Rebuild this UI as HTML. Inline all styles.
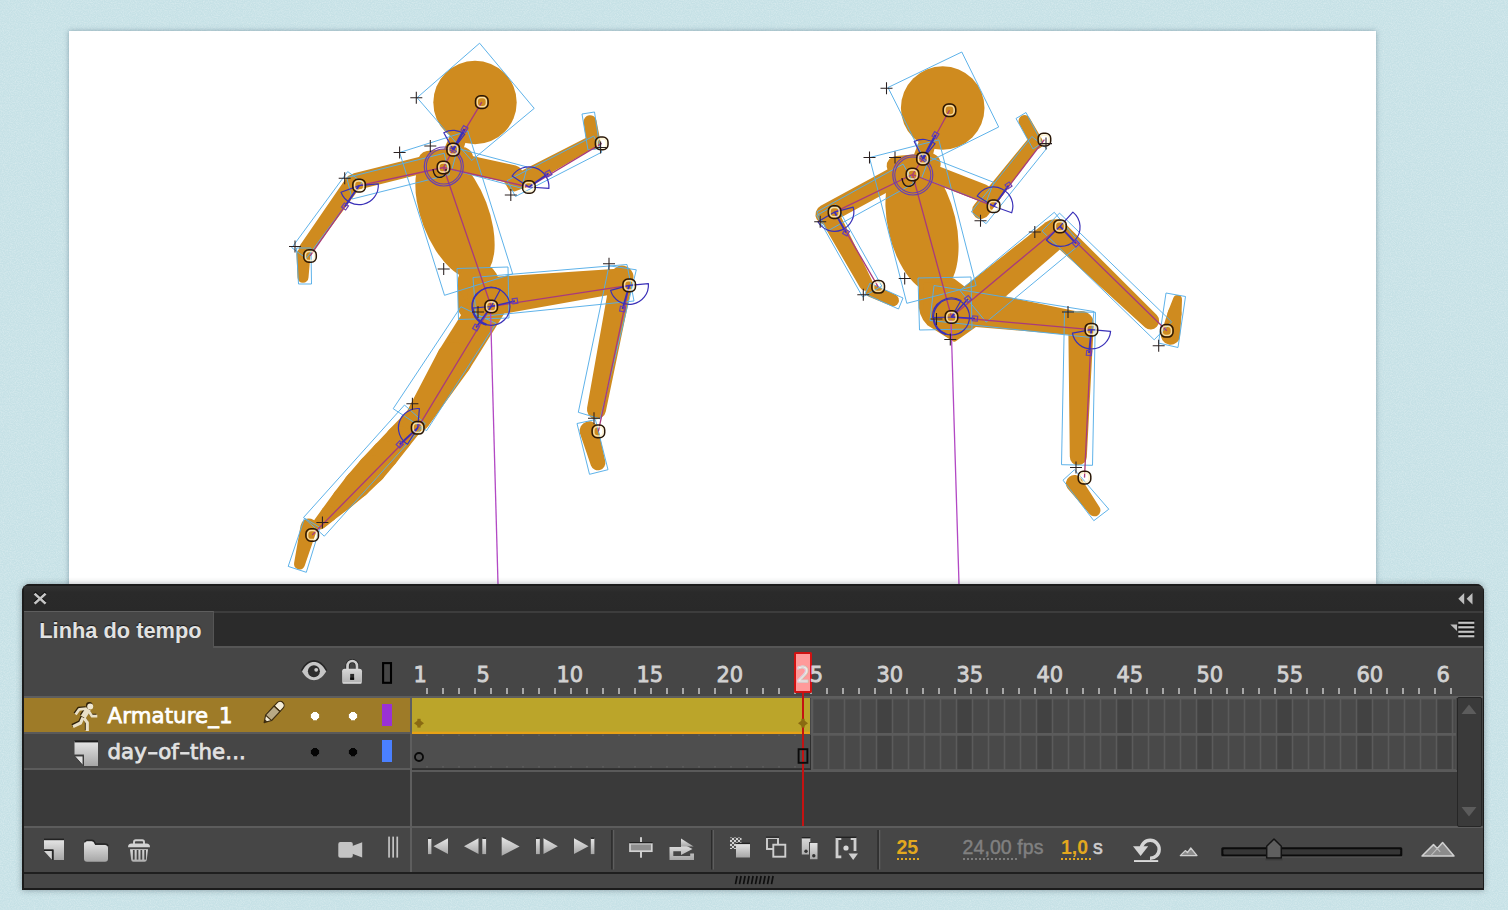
<!DOCTYPE html>
<html lang="pt"><head><meta charset="utf-8"><title>Linha do tempo</title>
<style>
html,body{margin:0;padding:0}
body{width:1508px;height:910px;position:relative;overflow:hidden;background:#c6e1e6;
 font-family:"DejaVu Sans","Liberation Sans",sans-serif;}
.abs{position:absolute}
#stage{left:69px;top:31px;width:1307px;height:560px;background:#fff;
 box-shadow:0 0 5px rgba(70,100,120,.5)}
#figs{left:0;top:0}
#panel{left:22px;top:584px;width:1462px;height:305.5px;background:#464646;
 border-radius:8px 8px 0 0;box-shadow:0 0 6px rgba(30,40,50,.38);overflow:hidden}
#panel .in{position:absolute;left:-22px;top:-584px;width:1508px;height:910px}
.t{position:absolute;white-space:nowrap;line-height:1}
.num{font-size:21px;color:#d2d2d2;top:664.6px;-webkit-text-stroke:.8px #d2d2d2}
.lname{font-size:21.3px;color:#fff;left:107.5px;-webkit-text-stroke:.75px currentColor;letter-spacing:.1px}
.hy{display:inline-block;transform:scaleX(1.45);margin:0 1.7px}
.bt{font-family:"Liberation Sans","DejaVu Sans",sans-serif;font-size:19.5px;top:838px}
</style></head>
<body>
<svg class="abs" style="left:0;top:0" width="1508" height="910" viewBox="0 0 1508 910"><defs><filter id="nz" x="0" y="0" width="100%" height="100%"><feTurbulence type="fractalNoise" baseFrequency="0.85" numOctaves="2" seed="7" stitchTiles="stitch"/><feColorMatrix type="matrix" values="0 0 0 0 1  0 0 0 0 1  0 0 0 0 1  0.55 0 0 0 -0.2"/></filter></defs><rect width="1508" height="910" filter="url(#nz)"/></svg>
<div id="stage" class="abs"></div>
<svg id="figs" class="abs" width="1508" height="910" viewBox="0 0 1508 910">
<defs><clipPath id="stclip"><rect x="69" y="31" width="1307" height="553"/></clipPath></defs>
<g clip-path="url(#stclip)">
<g fill="#cf8b1f"><circle cx="475" cy="102.5" r="41.7"/><path d="M450.2,134.7 L442.3,153.3 A9.5,9.5 0 1 0 460.1,159.8 L466.1,140.5 A8.5,8.5 0 0 0 450.2,134.7 Z"/><ellipse cx="455" cy="214.5" rx="33.5" ry="68" transform="rotate(-21 455 214.5)"/><path d="M428.6,171.0 L462.6,169.0 A11.0,11.0 0 1 0 460.7,147.1 L426.8,151.1 A10.0,10.0 0 0 0 428.6,171.0 Z"/><path d="M429.9,154.3 L353.9,173.3 A8.5,8.5 0 0 0 358.1,189.7 L434.1,170.7 A8.5,8.5 0 0 0 429.9,154.3 Z"/><path d="M346.0,178.2 L300.2,245.0 A7.0,7.0 0 0 0 311.6,253.2 L359.8,188.1 A8.5,8.5 0 1 0 346.0,178.2 Z"/><path d="M296.5,254.3 L297.5,277.2 A5.5,5.5 0 0 0 308.5,277.5 L310.5,254.6 A7.0,7.0 0 1 0 296.5,254.3 Z"/><path d="M458.0,171.7 L511.7,183.5 A9.2,9.2 0 0 0 515.7,165.5 L462.0,153.7 A9.2,9.2 0 0 0 458.0,171.7 Z"/><polygon points="503,180 509.3,190.5 514.6,191.6 528,186.5 521,174"/><path d="M526.3,187.3 L593.7,147.9 A6.2,6.2 0 0 0 587.7,136.9 L518.1,172.4 A8.5,8.5 0 1 0 526.3,187.3 Z"/><path d="M583.6,122.4 L586.6,143.5 A7.0,7.0 0 1 0 600.4,141.2 L596.4,120.3 A6.5,6.5 0 0 0 583.6,122.4 Z"/><rect x="458" y="268" width="40" height="51" rx="12"/><path d="M460.5,291.7 L471.4,311.2 A19.0,19.0 0 0 0 505.4,294.3 L496.3,273.9 A20.0,20.0 0 1 0 460.5,291.7 Z"/><path d="M489.4,316.2 L620.1,293.1 A12.2,12.2 0 0 0 617.2,268.8 L484.7,277.5 A19.5,19.5 0 1 0 489.4,316.2 Z"/><path d="M610.7,275.0 L587.1,407.8 A9.5,9.5 0 0 0 605.8,411.4 L633.3,279.3 A11.5,11.5 0 1 0 610.7,275.0 Z"/><path d="M580.0,433.6 L590.9,465.4 A7.5,7.5 0 0 0 605.3,461.4 L598.3,428.5 A9.5,9.5 0 1 0 580.0,433.6 Z"/><path d="M473.3,295.4 L438.8,350.4 A18.0,18.0 0 0 0 469.2,369.6 L503.7,314.6 A18.0,18.0 0 0 0 473.3,295.4 Z"/><path d="M438.0,351.7 L406.0,413.0 A13.0,13.0 0 0 0 428.0,426.6 L468.6,370.5 A18.0,18.0 0 1 0 438.0,351.7 Z"/><path d="M402.9,415.6 L388.8,430.1 A13.0,13.0 0 1 0 408.3,447.3 L420.9,431.5 A12.0,12.0 0 0 0 402.9,415.6 Z"/><path d="M388.7,430.2 L374.8,444.9 A14.0,14.0 0 1 0 396.0,463.1 L408.4,447.2 A13.0,13.0 0 0 0 388.7,430.2 Z"/><path d="M374.7,445.0 L360.9,459.7 A14.5,14.5 0 1 0 382.6,479.0 L395.6,463.6 A14.0,14.0 0 0 0 374.7,445.0 Z"/><path d="M360.5,460.2 L347.3,475.5 A13.5,13.5 0 0 0 366.9,494.1 L381.5,480.1 A14.5,14.5 0 1 0 360.5,460.2 Z"/><path d="M346.9,476.0 L334.6,491.9 A11.2,11.2 0 0 0 350.6,507.5 L366.1,494.7 A13.5,13.5 0 1 0 346.9,476.0 Z"/><path d="M334.4,492.2 L322.6,508.4 A8.2,8.2 0 0 0 334.3,519.8 L350.2,507.8 A11.2,11.2 0 1 0 334.4,492.2 Z"/><path d="M322.6,508.4 L314.8,519.2 A6.5,6.5 0 0 0 324.1,528.1 L334.5,519.7 A8.2,8.2 0 1 0 322.6,508.4 Z"/><path d="M300.6,525.5 L294.1,563.1 A5.5,5.5 0 0 0 304.7,565.8 L317.0,529.8 A8.5,8.5 0 1 0 300.6,525.5 Z"/></g>
<g><polygon points="479.6,43.2 534.2,108.4 471.6,160.5 417.1,97.7" fill="none" stroke="#55aee8" stroke-width="0.95"/><polygon points="444.1,153.3 346.8,177.6 352.1,199.0 449.5,174.6" fill="none" stroke="#55aee8" stroke-width="0.95"/><polygon points="347.7,171.6 291.8,247.7 306.3,258.4 362.2,182.3" fill="none" stroke="#55aee8" stroke-width="0.95"/><polygon points="296.5,248.0 311.0,248.0 311.5,284.0 298.5,284.0" fill="none" stroke="#55aee8" stroke-width="0.95"/><polygon points="451.9,169.6 521.5,188.2 527.2,167.0 457.6,148.4" fill="none" stroke="#55aee8" stroke-width="0.95"/><polygon points="515.4,196.5 601.9,152.1 593.7,136.1 507.2,180.5" fill="none" stroke="#55aee8" stroke-width="0.95"/><polygon points="582.0,114.0 594.5,112.0 600.0,148.5 588.0,150.0" fill="none" stroke="#55aee8" stroke-width="0.95"/><polygon points="399.6,152.5 467.8,131.0 512.7,273.9 444.5,295.3" fill="none" stroke="#55aee8" stroke-width="0.95"/><polygon points="457.0,268.5 508.0,267.0 509.0,318.0 458.5,319.5" fill="none" stroke="#55aee8" stroke-width="0.95"/><polygon points="473.0,277.5 627.0,264.5 634.0,301.0 476.0,317.0" fill="none" stroke="#55aee8" stroke-width="0.95"/><polygon points="609.0,265.8 578.3,412.3 600.2,418.9 636.3,269.8" fill="none" stroke="#55aee8" stroke-width="0.95"/><polygon points="577.0,423.5 595.4,419.6 608.0,469.7 589.5,474.3" fill="none" stroke="#55aee8" stroke-width="0.95"/><polygon points="460.9,306.7 393.2,408.7 426.6,430.6 496.0,323.4" fill="none" stroke="#55aee8" stroke-width="0.95"/><polygon points="404.5,405.0 303.5,517.5 324.3,536.2 425.3,423.7" fill="none" stroke="#55aee8" stroke-width="0.95"/><polygon points="304.5,518.2 320.0,527.5 306.3,572.3 288.2,566.4" fill="none" stroke="#55aee8" stroke-width="0.95"/><line x1="443.5" y1="167.5" x2="453.2" y2="149.6" stroke="#a83a7c" stroke-width="1.3"/><line x1="453.2" y1="149.6" x2="481.8" y2="102.1" stroke="#a83a7c" stroke-width="1.3"/><line x1="443.5" y1="167.5" x2="359.1" y2="185.6" stroke="#a83a7c" stroke-width="1.3"/><line x1="359.1" y1="185.6" x2="310" y2="256" stroke="#a83a7c" stroke-width="1.3"/><line x1="443.5" y1="167.5" x2="528.9" y2="187" stroke="#a83a7c" stroke-width="1.3"/><line x1="528.9" y1="187" x2="601.7" y2="143.4" stroke="#a83a7c" stroke-width="1.3"/><line x1="443.5" y1="167.5" x2="491.2" y2="306.5" stroke="#a83a7c" stroke-width="1.3"/><line x1="491.2" y1="306.5" x2="629.2" y2="285.4" stroke="#a83a7c" stroke-width="1.3"/><line x1="629.2" y1="285.4" x2="598.4" y2="431.4" stroke="#a83a7c" stroke-width="1.3"/><line x1="491.2" y1="306.5" x2="417.7" y2="427.8" stroke="#a83a7c" stroke-width="1.3"/><line x1="417.7" y1="427.8" x2="312.2" y2="535" stroke="#a83a7c" stroke-width="1.3"/><line x1="490.5" y1="310" x2="498" y2="584" stroke="#b248c4" stroke-width="1.3"/><circle cx="443.8" cy="166.5" r="19.5" fill="none" stroke="#6a3fb0" stroke-width="1.2"/><circle cx="443.8" cy="166.5" r="17.5" fill="none" stroke="#6a3fb0" stroke-width="1.1"/><path d="M453.2,149.6 L443.8,132.7 A19.3,19.3 0 0 1 464.8,134.2 Z" fill="none" stroke="#3a30b8" stroke-width="1.2" stroke-linejoin="round"/><path d="M359.1,185.6 L378.3,183.9 A19.3,19.3 0 0 1 341.0,192.2 Z" fill="none" stroke="#3a30b8" stroke-width="1.2" stroke-linejoin="round"/><path d="M528.9,187.0 L512.1,176.1 A20,20 0 0 1 548.9,188.4 Z" fill="none" stroke="#3a30b8" stroke-width="1.2" stroke-linejoin="round"/><path d="M491.2,306.5 L472.0,308.2 A19.3,19.3 0 0 1 500.3,289.5 Z" fill="none" stroke="#3a30b8" stroke-width="1.2" stroke-linejoin="round"/><circle cx="491.2" cy="306.5" r="18.8" fill="none" stroke="#3a30b8" stroke-width="1.2"/><path d="M472.5,308.5 A18.8,18.8 0 0 0 486.5,324.7" fill="none" stroke="#3a30b8" stroke-width="2.2"/><path d="M629.2,285.4 L648.4,283.7 A19.3,19.3 0 0 1 610.6,290.4 Z" fill="none" stroke="#3a30b8" stroke-width="1.2" stroke-linejoin="round"/><path d="M417.7,427.8 L407.5,444.2 A19.3,19.3 0 0 1 419.4,408.6 Z" fill="none" stroke="#3a30b8" stroke-width="1.2" stroke-linejoin="round"/><line x1="453.2" y1="149.6" x2="464.5" y2="129" stroke="#3a30b8" stroke-width="2.4"/><line x1="359.1" y1="185.6" x2="345" y2="206.5" stroke="#3a30b8" stroke-width="1.8"/><line x1="528.9" y1="187" x2="548.5" y2="173.5" stroke="#3a30b8" stroke-width="1.8"/><line x1="491.2" y1="306.5" x2="515" y2="301" stroke="#3a30b8" stroke-width="1.5"/><line x1="491.2" y1="306.5" x2="476" y2="327.5" stroke="#3a30b8" stroke-width="1.5"/><line x1="629.2" y1="285.4" x2="622.5" y2="309" stroke="#3a30b8" stroke-width="1.8"/><line x1="417.7" y1="427.8" x2="399.7" y2="444.4" stroke="#3a30b8" stroke-width="1.8"/><rect x="-2.5" y="-2.5" width="5.0" height="5.0" fill="none" stroke="#6a3fb0" stroke-width="1.2" transform="translate(464.5,129) rotate(30)"/><rect x="-2.5" y="-2.5" width="5.0" height="5.0" fill="none" stroke="#6a3fb0" stroke-width="1.2" transform="translate(345,206.5) rotate(35)"/><rect x="-2.5" y="-2.5" width="5.0" height="5.0" fill="none" stroke="#6a3fb0" stroke-width="1.2" transform="translate(548.5,173.5) rotate(-30)"/><rect x="-2.5" y="-2.5" width="5.0" height="5.0" fill="none" stroke="#6a3fb0" stroke-width="1.2" transform="translate(515,301) rotate(-8)"/><rect x="-2.5" y="-2.5" width="5.0" height="5.0" fill="none" stroke="#6a3fb0" stroke-width="1.2" transform="translate(476,327.5) rotate(30)"/><rect x="-2.5" y="-2.5" width="5.0" height="5.0" fill="none" stroke="#6a3fb0" stroke-width="1.2" transform="translate(622.5,309) rotate(10)"/><rect x="-2.5" y="-2.5" width="5.0" height="5.0" fill="none" stroke="#6a3fb0" stroke-width="1.2" transform="translate(399.7,444.4) rotate(45)"/><path d="M433,169 q1,10 9,8 q5,-2 4,-8" fill="none" stroke="#1c1414" stroke-width="1.3"/><rect x="477.2" y="97.5" width="9.2" height="9.2" rx="3.7" fill="none" stroke="#fff1c4" stroke-width="1.5" opacity=".8"/><rect x="475.5" y="95.8" width="12.6" height="12.6" rx="5.0" fill="none" stroke="#2a1706" stroke-width="1.5"/><rect x="448.6" y="145.0" width="9.2" height="9.2" rx="3.7" fill="none" stroke="#fff1c4" stroke-width="1.5" opacity=".8"/><rect x="446.9" y="143.3" width="12.6" height="12.6" rx="5.0" fill="none" stroke="#2a1706" stroke-width="1.5"/><rect x="438.9" y="162.9" width="9.2" height="9.2" rx="3.7" fill="none" stroke="#fff1c4" stroke-width="1.5" opacity=".8"/><rect x="437.2" y="161.2" width="12.6" height="12.6" rx="5.0" fill="none" stroke="#2a1706" stroke-width="1.5"/><rect x="354.5" y="181.0" width="9.2" height="9.2" rx="3.7" fill="none" stroke="#fff1c4" stroke-width="1.5" opacity=".8"/><rect x="352.8" y="179.3" width="12.6" height="12.6" rx="5.0" fill="none" stroke="#2a1706" stroke-width="1.5"/><rect x="305.4" y="251.4" width="9.2" height="9.2" rx="3.7" fill="none" stroke="#fff1c4" stroke-width="1.5" opacity=".8"/><rect x="303.7" y="249.7" width="12.6" height="12.6" rx="5.0" fill="none" stroke="#2a1706" stroke-width="1.5"/><rect x="524.3" y="182.4" width="9.2" height="9.2" rx="3.7" fill="none" stroke="#fff1c4" stroke-width="1.5" opacity=".8"/><rect x="522.6" y="180.7" width="12.6" height="12.6" rx="5.0" fill="none" stroke="#2a1706" stroke-width="1.5"/><rect x="597.1" y="138.8" width="9.2" height="9.2" rx="3.7" fill="none" stroke="#fff1c4" stroke-width="1.5" opacity=".8"/><rect x="595.4" y="137.1" width="12.6" height="12.6" rx="5.0" fill="none" stroke="#2a1706" stroke-width="1.5"/><rect x="486.6" y="301.9" width="9.2" height="9.2" rx="3.7" fill="none" stroke="#fff1c4" stroke-width="1.5" opacity=".8"/><rect x="484.9" y="300.2" width="12.6" height="12.6" rx="5.0" fill="none" stroke="#2a1706" stroke-width="1.5"/><rect x="624.6" y="280.8" width="9.2" height="9.2" rx="3.7" fill="none" stroke="#fff1c4" stroke-width="1.5" opacity=".8"/><rect x="622.9" y="279.1" width="12.6" height="12.6" rx="5.0" fill="none" stroke="#2a1706" stroke-width="1.5"/><rect x="593.8" y="426.8" width="9.2" height="9.2" rx="3.7" fill="none" stroke="#fff1c4" stroke-width="1.5" opacity=".8"/><rect x="592.1" y="425.1" width="12.6" height="12.6" rx="5.0" fill="none" stroke="#2a1706" stroke-width="1.5"/><rect x="413.1" y="423.2" width="9.2" height="9.2" rx="3.7" fill="none" stroke="#fff1c4" stroke-width="1.5" opacity=".8"/><rect x="411.4" y="421.5" width="12.6" height="12.6" rx="5.0" fill="none" stroke="#2a1706" stroke-width="1.5"/><rect x="307.6" y="530.4" width="9.2" height="9.2" rx="3.7" fill="none" stroke="#fff1c4" stroke-width="1.5" opacity=".8"/><rect x="305.9" y="528.7" width="12.6" height="12.6" rx="5.0" fill="none" stroke="#2a1706" stroke-width="1.5"/><path d="M410.3,97.7H422.3M416.3,91.7V103.7" stroke="#2a2020" stroke-width="1.05" fill="none"/><path d="M424.3,146.0H436.3M430.3,140.0V152.0" stroke="#2a2020" stroke-width="1.05" fill="none"/><path d="M393.6,152.5H405.6M399.6,146.5V158.5" stroke="#2a2020" stroke-width="1.05" fill="none"/><path d="M338.7,178.2H350.7M344.7,172.2V184.2" stroke="#2a2020" stroke-width="1.05" fill="none"/><path d="M289.0,246.5H301.0M295.0,240.5V252.5" stroke="#2a2020" stroke-width="1.05" fill="none"/><path d="M504.8,195.0H516.8M510.8,189.0V201.0" stroke="#2a2020" stroke-width="1.05" fill="none"/><path d="M594.6,147.5H606.6M600.6,141.5V153.5" stroke="#2a2020" stroke-width="1.05" fill="none"/><path d="M437.7,269.0H449.7M443.7,263.0V275.0" stroke="#2a2020" stroke-width="1.05" fill="none"/><path d="M603.0,263.7H615.0M609.0,257.7V269.7" stroke="#2a2020" stroke-width="1.05" fill="none"/><path d="M472.0,312.0H484.0M478.0,306.0V318.0" stroke="#2a2020" stroke-width="1.05" fill="none"/><path d="M406.4,403.7H418.4M412.4,397.7V409.7" stroke="#2a2020" stroke-width="1.05" fill="none"/><path d="M316.4,522.4H328.4M322.4,516.4V528.4" stroke="#2a2020" stroke-width="1.05" fill="none"/><path d="M588.0,418.2H600.0M594.0,412.2V424.2" stroke="#2a2020" stroke-width="1.05" fill="none"/></g>
<g fill="#cf8b1f"><circle cx="942.7" cy="108" r="41.8"/><path d="M919.0,141.0 L912.1,159.7 A9.5,9.5 0 1 0 930.2,165.4 L935.2,146.1 A8.5,8.5 0 0 0 919.0,141.0 Z"/><ellipse cx="922" cy="225" rx="34" ry="69" transform="rotate(-13 922 225)"/><path d="M897.3,176.0 L930.3,175.0 A11.0,11.0 0 1 0 929.0,153.0 L896.1,156.0 A10.0,10.0 0 0 0 897.3,176.0 Z"/><path d="M895.2,165.2 L820.7,205.7 A10.0,10.0 0 0 0 830.3,223.3 L904.8,182.8 A10.0,10.0 0 0 0 895.2,165.2 Z"/><path d="M822.9,223.9 L860.0,287.5 A7.0,7.0 0 0 0 872.3,280.9 L840.1,214.7 A9.8,9.8 0 1 0 822.9,223.9 Z"/><path d="M869.5,297.0 L891.2,306.0 A6.0,6.0 0 0 0 896.0,295.1 L874.8,285.1 A6.5,6.5 0 1 0 869.5,297.0 Z"/><path d="M923.3,179.4 L979.8,201.3 A8.8,8.8 0 0 0 986.2,184.7 L929.7,162.8 A8.8,8.8 0 0 0 923.3,179.4 Z"/><path d="M988.5,214.7 L1037.9,148.0 A6.8,6.8 0 0 0 1027.3,139.7 L974.7,204.0 A8.8,8.8 0 1 0 988.5,214.7 Z"/><path d="M1019.2,123.8 L1030.8,145.6 A6.5,6.5 0 1 0 1042.1,139.2 L1029.7,118.0 A6.0,6.0 0 0 0 1019.2,123.8 Z"/><path d="M921,280.5 L953,280.5 L963.5,288.5 L975,325 L954.5,339.5 L929,323.5 Q920,315 920.8,300 Z" stroke="#cf8b1f" stroke-width="4.5" stroke-linejoin="round"/><path d="M979.5,319.2 L1064.8,245.3 A15.0,15.0 0 0 0 1045.7,222.2 L957.1,292.3 A17.5,17.5 0 1 0 979.5,319.2 Z"/><path d="M1050.3,241.0 L1145.1,327.4 A8.5,8.5 0 0 0 1156.8,315.1 L1066.1,224.4 A11.5,11.5 0 1 0 1050.3,241.0 Z"/><path d="M1173.3,297.9 L1168.0,311.4 A7.0,7.0 0 1 0 1181.5,314.2 L1182.0,299.7 A4.5,4.5 0 0 0 1173.3,297.9 Z"/><path d="M1167.8,311.9 L1161.4,332.7 A9.5,9.5 0 1 0 1180.0,336.2 L1181.5,314.5 A7.0,7.0 0 0 0 1167.8,311.9 Z"/><path d="M951.4,324.9 L1079.0,335.7 A11.8,11.8 0 0 0 1082.4,312.5 L957.0,286.4 A19.5,19.5 0 1 0 951.4,324.9 Z"/><path d="M1068.3,325.2 L1069.8,456.6 A8.5,8.5 0 0 0 1086.8,456.9 L1093.7,325.7 A12.8,12.8 0 1 0 1068.3,325.2 Z"/><path d="M1067.6,488.6 L1090.0,514.4 A6.0,6.0 0 0 0 1099.6,507.3 L1081.2,478.4 A8.5,8.5 0 1 0 1067.6,488.6 Z"/></g>
<g><polygon points="961.8,52.0 998.7,127.0 926.0,163.0 888.0,87.5" fill="none" stroke="#55aee8" stroke-width="0.95"/><polygon points="903.1,164.1 816.9,211.8 827.5,231.0 913.8,183.4" fill="none" stroke="#55aee8" stroke-width="0.95"/><polygon points="816.7,215.4 862.6,296.9 881.8,286.1 835.9,204.6" fill="none" stroke="#55aee8" stroke-width="0.95"/><polygon points="870.0,283.0 903.0,298.0 898.5,309.0 865.0,294.0" fill="none" stroke="#55aee8" stroke-width="0.95"/><polygon points="921.7,177.8 985.8,202.9 993.8,182.4 929.7,157.3" fill="none" stroke="#55aee8" stroke-width="0.95"/><polygon points="986.1,223.7 1046.7,148.4 1031.8,136.5 971.3,211.8" fill="none" stroke="#55aee8" stroke-width="0.95"/><polygon points="1016.0,118.5 1026.0,112.5 1042.0,143.0 1033.0,149.0" fill="none" stroke="#55aee8" stroke-width="0.95"/><polygon points="869.5,157.6 938.8,139.9 976.1,285.6 906.8,303.3" fill="none" stroke="#55aee8" stroke-width="0.95"/><polygon points="918.0,278.0 971.0,277.0 972.0,329.0 919.5,330.0" fill="none" stroke="#55aee8" stroke-width="0.95"/><polygon points="934.0,285.5 1094.0,311.5 1091.0,337.5 930.0,320.5" fill="none" stroke="#55aee8" stroke-width="0.95"/><polygon points="960.0,290.5 1054.3,212.3 1080.5,243.9 986.2,322.1" fill="none" stroke="#55aee8" stroke-width="0.95"/><polygon points="1042.1,231.0 1154.2,339.8 1171.6,321.8 1059.5,213.1" fill="none" stroke="#55aee8" stroke-width="0.95"/><polygon points="1166.0,293.0 1185.5,296.5 1178.0,347.5 1158.5,343.0" fill="none" stroke="#55aee8" stroke-width="0.95"/><polygon points="1064.5,311.7 1061.5,464.7 1092.5,465.3 1095.5,312.3" fill="none" stroke="#55aee8" stroke-width="0.95"/><polygon points="1063.0,480.2 1074.5,469.7 1108.8,509.2 1093.8,520.7" fill="none" stroke="#55aee8" stroke-width="0.95"/><line x1="912.5" y1="174.5" x2="923" y2="158.7" stroke="#a83a7c" stroke-width="1.3"/><line x1="923" y1="158.7" x2="949.5" y2="110.3" stroke="#a83a7c" stroke-width="1.3"/><line x1="912.5" y1="174.5" x2="834.6" y2="212.1" stroke="#a83a7c" stroke-width="1.3"/><line x1="834.6" y1="212.1" x2="878.2" y2="286.8" stroke="#a83a7c" stroke-width="1.3"/><line x1="912.5" y1="174.5" x2="993.6" y2="206.2" stroke="#a83a7c" stroke-width="1.3"/><line x1="993.6" y1="206.2" x2="1044.4" y2="139.6" stroke="#a83a7c" stroke-width="1.3"/><line x1="912.5" y1="174.5" x2="951.5" y2="317" stroke="#a83a7c" stroke-width="1.3"/><line x1="951.5" y1="317" x2="1060" y2="226.4" stroke="#a83a7c" stroke-width="1.3"/><line x1="1060" y1="226.4" x2="1166.8" y2="330.8" stroke="#a83a7c" stroke-width="1.3"/><line x1="951.5" y1="317" x2="1091.4" y2="329.7" stroke="#a83a7c" stroke-width="1.3"/><line x1="1091.4" y1="329.7" x2="1084.5" y2="477.6" stroke="#a83a7c" stroke-width="1.3"/><line x1="951" y1="320" x2="959" y2="584" stroke="#b248c4" stroke-width="1.3"/><circle cx="912.8" cy="175" r="20" fill="none" stroke="#6a3fb0" stroke-width="1.2"/><circle cx="912.8" cy="175" r="18" fill="none" stroke="#6a3fb0" stroke-width="1.1"/><path d="M923.0,158.7 L914.2,141.5 A19.3,19.3 0 0 1 935.1,143.7 Z" fill="none" stroke="#3a30b8" stroke-width="1.2" stroke-linejoin="round"/><path d="M834.6,212.1 L853.2,207.1 A19.3,19.3 0 0 1 817.9,221.8 Z" fill="none" stroke="#3a30b8" stroke-width="1.2" stroke-linejoin="round"/><path d="M993.6,206.2 L977.2,196.0 A19.3,19.3 0 0 1 1011.7,212.8 Z" fill="none" stroke="#3a30b8" stroke-width="1.2" stroke-linejoin="round"/><path d="M1060.0,226.4 L1072.9,212.1 A19.3,19.3 0 1 1 1046.4,240.0 Z" fill="none" stroke="#3a30b8" stroke-width="1.2" stroke-linejoin="round"/><path d="M951.5,317.0 L932.5,317.7 A19,19 0 0 1 961.0,300.5 Z" fill="none" stroke="#3a30b8" stroke-width="1.2" stroke-linejoin="round"/><circle cx="951.5" cy="317" r="18" fill="none" stroke="#3a30b8" stroke-width="1.2"/><path d="M933.6,319 A18,18 0 0 0 946,334.2" fill="none" stroke="#3a30b8" stroke-width="2.2"/><path d="M1091.4,329.7 L1110.6,331.4 A19.3,19.3 0 0 1 1072.4,333.1 Z" fill="none" stroke="#3a30b8" stroke-width="1.2" stroke-linejoin="round"/><line x1="923" y1="158.7" x2="935.5" y2="135" stroke="#3a30b8" stroke-width="2.4"/><line x1="834.6" y1="212.1" x2="846" y2="232.5" stroke="#3a30b8" stroke-width="1.8"/><line x1="993.6" y1="206.2" x2="1008.5" y2="185.5" stroke="#3a30b8" stroke-width="1.8"/><line x1="951.5" y1="317" x2="968" y2="299" stroke="#3a30b8" stroke-width="1.5"/><line x1="951.5" y1="317" x2="975" y2="318.5" stroke="#3a30b8" stroke-width="1.5"/><line x1="1060" y1="226.4" x2="1076" y2="243.5" stroke="#3a30b8" stroke-width="1.8"/><line x1="1091.4" y1="329.7" x2="1089" y2="353" stroke="#3a30b8" stroke-width="1.8"/><rect x="-2.5" y="-2.5" width="5.0" height="5.0" fill="none" stroke="#6a3fb0" stroke-width="1.2" transform="translate(935.5,135) rotate(30)"/><rect x="-2.5" y="-2.5" width="5.0" height="5.0" fill="none" stroke="#6a3fb0" stroke-width="1.2" transform="translate(846,232.5) rotate(30)"/><rect x="-2.5" y="-2.5" width="5.0" height="5.0" fill="none" stroke="#6a3fb0" stroke-width="1.2" transform="translate(1008.5,185.5) rotate(-35)"/><rect x="-2.5" y="-2.5" width="5.0" height="5.0" fill="none" stroke="#6a3fb0" stroke-width="1.2" transform="translate(968,299) rotate(-40)"/><rect x="-2.5" y="-2.5" width="5.0" height="5.0" fill="none" stroke="#6a3fb0" stroke-width="1.2" transform="translate(975,318.5) rotate(5)"/><rect x="-2.5" y="-2.5" width="5.0" height="5.0" fill="none" stroke="#6a3fb0" stroke-width="1.2" transform="translate(1076,243.5) rotate(45)"/><rect x="-2.5" y="-2.5" width="5.0" height="5.0" fill="none" stroke="#6a3fb0" stroke-width="1.2" transform="translate(1089,353) rotate(5)"/><path d="M902,178 q1,10 9,8 q5,-2 4,-8" fill="none" stroke="#1c1414" stroke-width="1.3"/><rect x="944.9" y="105.7" width="9.2" height="9.2" rx="3.7" fill="none" stroke="#fff1c4" stroke-width="1.5" opacity=".8"/><rect x="943.2" y="104.0" width="12.6" height="12.6" rx="5.0" fill="none" stroke="#2a1706" stroke-width="1.5"/><rect x="918.4" y="154.1" width="9.2" height="9.2" rx="3.7" fill="none" stroke="#fff1c4" stroke-width="1.5" opacity=".8"/><rect x="916.7" y="152.4" width="12.6" height="12.6" rx="5.0" fill="none" stroke="#2a1706" stroke-width="1.5"/><rect x="907.9" y="169.9" width="9.2" height="9.2" rx="3.7" fill="none" stroke="#fff1c4" stroke-width="1.5" opacity=".8"/><rect x="906.2" y="168.2" width="12.6" height="12.6" rx="5.0" fill="none" stroke="#2a1706" stroke-width="1.5"/><rect x="830.0" y="207.5" width="9.2" height="9.2" rx="3.7" fill="none" stroke="#fff1c4" stroke-width="1.5" opacity=".8"/><rect x="828.3" y="205.8" width="12.6" height="12.6" rx="5.0" fill="none" stroke="#2a1706" stroke-width="1.5"/><rect x="873.6" y="282.2" width="9.2" height="9.2" rx="3.7" fill="none" stroke="#fff1c4" stroke-width="1.5" opacity=".8"/><rect x="871.9" y="280.5" width="12.6" height="12.6" rx="5.0" fill="none" stroke="#2a1706" stroke-width="1.5"/><rect x="989.0" y="201.6" width="9.2" height="9.2" rx="3.7" fill="none" stroke="#fff1c4" stroke-width="1.5" opacity=".8"/><rect x="987.3" y="199.9" width="12.6" height="12.6" rx="5.0" fill="none" stroke="#2a1706" stroke-width="1.5"/><rect x="1039.8" y="135.0" width="9.2" height="9.2" rx="3.7" fill="none" stroke="#fff1c4" stroke-width="1.5" opacity=".8"/><rect x="1038.1" y="133.3" width="12.6" height="12.6" rx="5.0" fill="none" stroke="#2a1706" stroke-width="1.5"/><rect x="946.9" y="312.4" width="9.2" height="9.2" rx="3.7" fill="none" stroke="#fff1c4" stroke-width="1.5" opacity=".8"/><rect x="945.2" y="310.7" width="12.6" height="12.6" rx="5.0" fill="none" stroke="#2a1706" stroke-width="1.5"/><rect x="1055.4" y="221.8" width="9.2" height="9.2" rx="3.7" fill="none" stroke="#fff1c4" stroke-width="1.5" opacity=".8"/><rect x="1053.7" y="220.1" width="12.6" height="12.6" rx="5.0" fill="none" stroke="#2a1706" stroke-width="1.5"/><rect x="1162.2" y="326.2" width="9.2" height="9.2" rx="3.7" fill="none" stroke="#fff1c4" stroke-width="1.5" opacity=".8"/><rect x="1160.5" y="324.5" width="12.6" height="12.6" rx="5.0" fill="none" stroke="#2a1706" stroke-width="1.5"/><rect x="1086.8" y="325.1" width="9.2" height="9.2" rx="3.7" fill="none" stroke="#fff1c4" stroke-width="1.5" opacity=".8"/><rect x="1085.1" y="323.4" width="12.6" height="12.6" rx="5.0" fill="none" stroke="#2a1706" stroke-width="1.5"/><rect x="1079.9" y="473.0" width="9.2" height="9.2" rx="3.7" fill="none" stroke="#fff1c4" stroke-width="1.5" opacity=".8"/><rect x="1078.2" y="471.3" width="12.6" height="12.6" rx="5.0" fill="none" stroke="#2a1706" stroke-width="1.5"/><path d="M880.5,88.3H892.5M886.5,82.3V94.3" stroke="#2a2020" stroke-width="1.05" fill="none"/><path d="M863.5,157.4H875.5M869.5,151.4V163.4" stroke="#2a2020" stroke-width="1.05" fill="none"/><path d="M889.0,157.4H901.0M895.0,151.4V163.4" stroke="#2a2020" stroke-width="1.05" fill="none"/><path d="M814.2,221.8H826.2M820.2,215.8V227.8" stroke="#2a2020" stroke-width="1.05" fill="none"/><path d="M857.3,294.7H869.3M863.3,288.7V300.7" stroke="#2a2020" stroke-width="1.05" fill="none"/><path d="M898.7,278.5H910.7M904.7,272.5V284.5" stroke="#2a2020" stroke-width="1.05" fill="none"/><path d="M974.5,220.7H986.5M980.5,214.7V226.7" stroke="#2a2020" stroke-width="1.05" fill="none"/><path d="M1040.0,143.6H1052.0M1046.0,137.6V149.6" stroke="#2a2020" stroke-width="1.05" fill="none"/><path d="M1028.8,232.0H1040.8M1034.8,226.0V238.0" stroke="#2a2020" stroke-width="1.05" fill="none"/><path d="M1062.0,312.0H1074.0M1068.0,306.0V318.0" stroke="#2a2020" stroke-width="1.05" fill="none"/><path d="M930.5,319.0H942.5M936.5,313.0V325.0" stroke="#2a2020" stroke-width="1.05" fill="none"/><path d="M944.3,339.5H956.3M950.3,333.5V345.5" stroke="#2a2020" stroke-width="1.05" fill="none"/><path d="M1152.7,345.7H1164.7M1158.7,339.7V351.7" stroke="#2a2020" stroke-width="1.05" fill="none"/><path d="M1070.0,467.4H1082.0M1076.0,461.4V473.4" stroke="#2a2020" stroke-width="1.05" fill="none"/></g>
</g></svg>
<div id="panel" class="abs"><div class="in"><div class="abs" style="left:22px;top:584px;width:1462px;height:28px;background:linear-gradient(#343434,#2a2a2a 30%,#292929);"></div><div class="abs" style="left:22px;top:584px;width:1462px;height:1.5px;background:#1b1b1b;"></div><div class="abs" style="left:22px;top:611px;width:1462px;height:2px;background:#3d3d3d;"></div><div class="abs" style="left:22px;top:613px;width:1462px;height:33.5px;background:#2b2b2b;"></div><div class="abs" style="left:22px;top:646px;width:1462px;height:2px;background:#565656;"></div><div class="abs" style="left:24px;top:611px;width:190px;height:37px;background:#464646;border-top:1.5px solid #5e5e5e;border-right:1.5px solid #555;box-sizing:border-box"></div><div class="abs" style="left:22px;top:648px;width:1462px;height:48px;background:#464646;"></div><div class="abs" style="left:22px;top:696px;width:1462px;height:2px;background:#5e5e5e;"></div><div class="abs" style="left:22px;top:698px;width:388px;height:34px;background:#9e7b28;"></div><div class="abs" style="left:22px;top:732px;width:388px;height:2px;background:#5a5a5a;"></div><div class="abs" style="left:22px;top:734px;width:388px;height:33.5px;background:#464646;"></div><div class="abs" style="left:412px;top:698px;width:1045px;height:72px;background:#474747;"></div><div class="abs" style="left:22px;top:770px;width:1462px;height:56px;background:#3a3a3a;"></div><div class="abs" style="left:22px;top:768.2px;width:388px;height:2px;background:#5c5c5c;"></div><div class="abs" style="left:412px;top:768.2px;width:399.7px;height:1.8px;background:#2e2e2e;"></div><div class="abs" style="left:810px;top:734.5px;width:1.7px;height:35.5px;background:#2e2e2e;"></div><div class="abs" style="left:412px;top:770px;width:1045px;height:2.1px;background:#5a5a5a;"></div><div class="abs" style="left:22px;top:826px;width:1462px;height:2px;background:#5c5c5c;"></div><div class="abs" style="left:22px;top:828px;width:1462px;height:44px;background:#464646;"></div><div class="abs" style="left:22px;top:872px;width:1462px;height:2.2px;background:#1f1f1f;"></div><div class="abs" style="left:22px;top:874.2px;width:1462px;height:14px;background:#464646;"></div><div class="abs" style="left:22px;top:888px;width:1462px;height:1.5px;background:#1b1b1b;"></div><div class="abs" style="left:22px;top:584px;width:1.5px;height:306px;background:#1b1b1b;"></div><div class="abs" style="left:1482.5px;top:584px;width:1.5px;height:306px;background:#1b1b1b;"></div><div class="abs" style="left:811.3px;top:698px;width:644.4px;height:72px;background:#5b5b5b;"></div><div class="abs" style="left:410.1px;top:698px;width:1.9px;height:174px;background:#5e5e5e;"></div><svg class="abs" style="left:0;top:0" width="1508" height="910" viewBox="0 0 1508 910">
<defs><linearGradient id="ig" x1="0" y1="0" x2="0" y2="1"><stop offset="0" stop-color="#dcdcdc"/><stop offset="1" stop-color="#a8a8a8"/></linearGradient></defs>
<rect x="426.1" y="688" width="1.8" height="6" fill="#b2b2b2"/>
<rect x="442.1" y="688" width="1.8" height="6" fill="#b2b2b2"/>
<rect x="458.1" y="688" width="1.8" height="6" fill="#b2b2b2"/>
<rect x="474.1" y="688" width="1.8" height="6" fill="#b2b2b2"/>
<rect x="490.1" y="688" width="1.8" height="6" fill="#b2b2b2"/>
<rect x="506.1" y="688" width="1.8" height="6" fill="#b2b2b2"/>
<rect x="522.1" y="688" width="1.8" height="6" fill="#b2b2b2"/>
<rect x="538.1" y="688" width="1.8" height="6" fill="#b2b2b2"/>
<rect x="554.1" y="688" width="1.8" height="6" fill="#b2b2b2"/>
<rect x="570.1" y="688" width="1.8" height="6" fill="#b2b2b2"/>
<rect x="586.1" y="688" width="1.8" height="6" fill="#b2b2b2"/>
<rect x="602.1" y="688" width="1.8" height="6" fill="#b2b2b2"/>
<rect x="618.1" y="688" width="1.8" height="6" fill="#b2b2b2"/>
<rect x="634.1" y="688" width="1.8" height="6" fill="#b2b2b2"/>
<rect x="650.1" y="688" width="1.8" height="6" fill="#b2b2b2"/>
<rect x="666.1" y="688" width="1.8" height="6" fill="#b2b2b2"/>
<rect x="682.1" y="688" width="1.8" height="6" fill="#b2b2b2"/>
<rect x="698.1" y="688" width="1.8" height="6" fill="#b2b2b2"/>
<rect x="714.1" y="688" width="1.8" height="6" fill="#b2b2b2"/>
<rect x="730.1" y="688" width="1.8" height="6" fill="#b2b2b2"/>
<rect x="746.1" y="688" width="1.8" height="6" fill="#b2b2b2"/>
<rect x="762.1" y="688" width="1.8" height="6" fill="#b2b2b2"/>
<rect x="778.1" y="688" width="1.8" height="6" fill="#b2b2b2"/>
<rect x="794.1" y="688" width="1.8" height="6" fill="#b2b2b2"/>
<rect x="810.1" y="688" width="1.8" height="6" fill="#b2b2b2"/>
<rect x="826.1" y="688" width="1.8" height="6" fill="#b2b2b2"/>
<rect x="842.1" y="688" width="1.8" height="6" fill="#b2b2b2"/>
<rect x="858.1" y="688" width="1.8" height="6" fill="#b2b2b2"/>
<rect x="874.1" y="688" width="1.8" height="6" fill="#b2b2b2"/>
<rect x="890.1" y="688" width="1.8" height="6" fill="#b2b2b2"/>
<rect x="906.1" y="688" width="1.8" height="6" fill="#b2b2b2"/>
<rect x="922.1" y="688" width="1.8" height="6" fill="#b2b2b2"/>
<rect x="938.1" y="688" width="1.8" height="6" fill="#b2b2b2"/>
<rect x="954.1" y="688" width="1.8" height="6" fill="#b2b2b2"/>
<rect x="970.1" y="688" width="1.8" height="6" fill="#b2b2b2"/>
<rect x="986.1" y="688" width="1.8" height="6" fill="#b2b2b2"/>
<rect x="1002.1" y="688" width="1.8" height="6" fill="#b2b2b2"/>
<rect x="1018.1" y="688" width="1.8" height="6" fill="#b2b2b2"/>
<rect x="1034.1" y="688" width="1.8" height="6" fill="#b2b2b2"/>
<rect x="1050.1" y="688" width="1.8" height="6" fill="#b2b2b2"/>
<rect x="1066.1" y="688" width="1.8" height="6" fill="#b2b2b2"/>
<rect x="1082.1" y="688" width="1.8" height="6" fill="#b2b2b2"/>
<rect x="1098.1" y="688" width="1.8" height="6" fill="#b2b2b2"/>
<rect x="1114.1" y="688" width="1.8" height="6" fill="#b2b2b2"/>
<rect x="1130.1" y="688" width="1.8" height="6" fill="#b2b2b2"/>
<rect x="1146.1" y="688" width="1.8" height="6" fill="#b2b2b2"/>
<rect x="1162.1" y="688" width="1.8" height="6" fill="#b2b2b2"/>
<rect x="1178.1" y="688" width="1.8" height="6" fill="#b2b2b2"/>
<rect x="1194.1" y="688" width="1.8" height="6" fill="#b2b2b2"/>
<rect x="1210.1" y="688" width="1.8" height="6" fill="#b2b2b2"/>
<rect x="1226.1" y="688" width="1.8" height="6" fill="#b2b2b2"/>
<rect x="1242.1" y="688" width="1.8" height="6" fill="#b2b2b2"/>
<rect x="1258.1" y="688" width="1.8" height="6" fill="#b2b2b2"/>
<rect x="1274.1" y="688" width="1.8" height="6" fill="#b2b2b2"/>
<rect x="1290.1" y="688" width="1.8" height="6" fill="#b2b2b2"/>
<rect x="1306.1" y="688" width="1.8" height="6" fill="#b2b2b2"/>
<rect x="1322.1" y="688" width="1.8" height="6" fill="#b2b2b2"/>
<rect x="1338.1" y="688" width="1.8" height="6" fill="#b2b2b2"/>
<rect x="1354.1" y="688" width="1.8" height="6" fill="#b2b2b2"/>
<rect x="1370.1" y="688" width="1.8" height="6" fill="#b2b2b2"/>
<rect x="1386.1" y="688" width="1.8" height="6" fill="#b2b2b2"/>
<rect x="1402.1" y="688" width="1.8" height="6" fill="#b2b2b2"/>
<rect x="1418.1" y="688" width="1.8" height="6" fill="#b2b2b2"/>
<rect x="1434.1" y="688" width="1.8" height="6" fill="#b2b2b2"/>
<rect x="1450.1" y="688" width="1.8" height="6" fill="#b2b2b2"/>
<rect x="412" y="698" width="398" height="34" fill="#bba52a"/>
<rect x="412" y="731.7" width="398" height="2.5" fill="#e8a216"/>
<rect x="412" y="734.2" width="398" height="34" fill="#4e4e4e"/>
<rect x="426.2" y="734.5" width="1.6" height="1.6" fill="#5e5e5e"/>
<rect x="426.2" y="766" width="1.6" height="1.6" fill="#5e5e5e"/>
<rect x="442.2" y="734.5" width="1.6" height="1.6" fill="#5e5e5e"/>
<rect x="442.2" y="766" width="1.6" height="1.6" fill="#5e5e5e"/>
<rect x="458.2" y="734.5" width="1.6" height="1.6" fill="#5e5e5e"/>
<rect x="458.2" y="766" width="1.6" height="1.6" fill="#5e5e5e"/>
<rect x="474.2" y="734.5" width="1.6" height="1.6" fill="#5e5e5e"/>
<rect x="474.2" y="766" width="1.6" height="1.6" fill="#5e5e5e"/>
<rect x="490.2" y="734.5" width="1.6" height="1.6" fill="#5e5e5e"/>
<rect x="490.2" y="766" width="1.6" height="1.6" fill="#5e5e5e"/>
<rect x="506.2" y="734.5" width="1.6" height="1.6" fill="#5e5e5e"/>
<rect x="506.2" y="766" width="1.6" height="1.6" fill="#5e5e5e"/>
<rect x="522.2" y="734.5" width="1.6" height="1.6" fill="#5e5e5e"/>
<rect x="522.2" y="766" width="1.6" height="1.6" fill="#5e5e5e"/>
<rect x="538.2" y="734.5" width="1.6" height="1.6" fill="#5e5e5e"/>
<rect x="538.2" y="766" width="1.6" height="1.6" fill="#5e5e5e"/>
<rect x="554.2" y="734.5" width="1.6" height="1.6" fill="#5e5e5e"/>
<rect x="554.2" y="766" width="1.6" height="1.6" fill="#5e5e5e"/>
<rect x="570.2" y="734.5" width="1.6" height="1.6" fill="#5e5e5e"/>
<rect x="570.2" y="766" width="1.6" height="1.6" fill="#5e5e5e"/>
<rect x="586.2" y="734.5" width="1.6" height="1.6" fill="#5e5e5e"/>
<rect x="586.2" y="766" width="1.6" height="1.6" fill="#5e5e5e"/>
<rect x="602.2" y="734.5" width="1.6" height="1.6" fill="#5e5e5e"/>
<rect x="602.2" y="766" width="1.6" height="1.6" fill="#5e5e5e"/>
<rect x="618.2" y="734.5" width="1.6" height="1.6" fill="#5e5e5e"/>
<rect x="618.2" y="766" width="1.6" height="1.6" fill="#5e5e5e"/>
<rect x="634.2" y="734.5" width="1.6" height="1.6" fill="#5e5e5e"/>
<rect x="634.2" y="766" width="1.6" height="1.6" fill="#5e5e5e"/>
<rect x="650.2" y="734.5" width="1.6" height="1.6" fill="#5e5e5e"/>
<rect x="650.2" y="766" width="1.6" height="1.6" fill="#5e5e5e"/>
<rect x="666.2" y="734.5" width="1.6" height="1.6" fill="#5e5e5e"/>
<rect x="666.2" y="766" width="1.6" height="1.6" fill="#5e5e5e"/>
<rect x="682.2" y="734.5" width="1.6" height="1.6" fill="#5e5e5e"/>
<rect x="682.2" y="766" width="1.6" height="1.6" fill="#5e5e5e"/>
<rect x="698.2" y="734.5" width="1.6" height="1.6" fill="#5e5e5e"/>
<rect x="698.2" y="766" width="1.6" height="1.6" fill="#5e5e5e"/>
<rect x="714.2" y="734.5" width="1.6" height="1.6" fill="#5e5e5e"/>
<rect x="714.2" y="766" width="1.6" height="1.6" fill="#5e5e5e"/>
<rect x="730.2" y="734.5" width="1.6" height="1.6" fill="#5e5e5e"/>
<rect x="730.2" y="766" width="1.6" height="1.6" fill="#5e5e5e"/>
<rect x="746.2" y="734.5" width="1.6" height="1.6" fill="#5e5e5e"/>
<rect x="746.2" y="766" width="1.6" height="1.6" fill="#5e5e5e"/>
<rect x="762.2" y="734.5" width="1.6" height="1.6" fill="#5e5e5e"/>
<rect x="762.2" y="766" width="1.6" height="1.6" fill="#5e5e5e"/>
<rect x="778.2" y="734.5" width="1.6" height="1.6" fill="#5e5e5e"/>
<rect x="778.2" y="766" width="1.6" height="1.6" fill="#5e5e5e"/>
<rect x="794.2" y="734.5" width="1.6" height="1.6" fill="#5e5e5e"/>
<rect x="794.2" y="766" width="1.6" height="1.6" fill="#5e5e5e"/>
<rect x="813.3" y="699.4" width="14.4" height="33.6" fill="#494949"/>
<rect x="829.3" y="699.4" width="14.4" height="33.6" fill="#494949"/>
<rect x="845.3" y="699.4" width="14.4" height="33.6" fill="#494949"/>
<rect x="861.3" y="699.4" width="14.4" height="33.6" fill="#494949"/>
<rect x="877.3" y="699.4" width="14.4" height="33.6" fill="#424242"/>
<rect x="893.3" y="699.4" width="14.4" height="33.6" fill="#494949"/>
<rect x="909.3" y="699.4" width="14.4" height="33.6" fill="#494949"/>
<rect x="925.3" y="699.4" width="14.4" height="33.6" fill="#494949"/>
<rect x="941.3" y="699.4" width="14.4" height="33.6" fill="#494949"/>
<rect x="957.3" y="699.4" width="14.4" height="33.6" fill="#424242"/>
<rect x="973.3" y="699.4" width="14.4" height="33.6" fill="#494949"/>
<rect x="989.3" y="699.4" width="14.4" height="33.6" fill="#494949"/>
<rect x="1005.3" y="699.4" width="14.4" height="33.6" fill="#494949"/>
<rect x="1021.3" y="699.4" width="14.4" height="33.6" fill="#494949"/>
<rect x="1037.3" y="699.4" width="14.4" height="33.6" fill="#424242"/>
<rect x="1053.3" y="699.4" width="14.4" height="33.6" fill="#494949"/>
<rect x="1069.3" y="699.4" width="14.4" height="33.6" fill="#494949"/>
<rect x="1085.3" y="699.4" width="14.4" height="33.6" fill="#494949"/>
<rect x="1101.3" y="699.4" width="14.4" height="33.6" fill="#494949"/>
<rect x="1117.3" y="699.4" width="14.4" height="33.6" fill="#424242"/>
<rect x="1133.3" y="699.4" width="14.4" height="33.6" fill="#494949"/>
<rect x="1149.3" y="699.4" width="14.4" height="33.6" fill="#494949"/>
<rect x="1165.3" y="699.4" width="14.4" height="33.6" fill="#494949"/>
<rect x="1181.3" y="699.4" width="14.4" height="33.6" fill="#494949"/>
<rect x="1197.3" y="699.4" width="14.4" height="33.6" fill="#424242"/>
<rect x="1213.3" y="699.4" width="14.4" height="33.6" fill="#494949"/>
<rect x="1229.3" y="699.4" width="14.4" height="33.6" fill="#494949"/>
<rect x="1245.3" y="699.4" width="14.4" height="33.6" fill="#494949"/>
<rect x="1261.3" y="699.4" width="14.4" height="33.6" fill="#494949"/>
<rect x="1277.3" y="699.4" width="14.4" height="33.6" fill="#424242"/>
<rect x="1293.3" y="699.4" width="14.4" height="33.6" fill="#494949"/>
<rect x="1309.3" y="699.4" width="14.4" height="33.6" fill="#494949"/>
<rect x="1325.3" y="699.4" width="14.4" height="33.6" fill="#494949"/>
<rect x="1341.3" y="699.4" width="14.4" height="33.6" fill="#494949"/>
<rect x="1357.3" y="699.4" width="14.4" height="33.6" fill="#424242"/>
<rect x="1373.3" y="699.4" width="14.4" height="33.6" fill="#494949"/>
<rect x="1389.3" y="699.4" width="14.4" height="33.6" fill="#494949"/>
<rect x="1405.3" y="699.4" width="14.4" height="33.6" fill="#494949"/>
<rect x="1421.3" y="699.4" width="14.4" height="33.6" fill="#494949"/>
<rect x="1437.3" y="699.4" width="14.4" height="33.6" fill="#424242"/>
<rect x="1453.3" y="699.4" width="2.4" height="33.6" fill="#494949"/>
<rect x="813.3" y="735.8" width="14.4" height="33.3" fill="#494949"/>
<rect x="829.3" y="735.8" width="14.4" height="33.3" fill="#494949"/>
<rect x="845.3" y="735.8" width="14.4" height="33.3" fill="#494949"/>
<rect x="861.3" y="735.8" width="14.4" height="33.3" fill="#494949"/>
<rect x="877.3" y="735.8" width="14.4" height="33.3" fill="#424242"/>
<rect x="893.3" y="735.8" width="14.4" height="33.3" fill="#494949"/>
<rect x="909.3" y="735.8" width="14.4" height="33.3" fill="#494949"/>
<rect x="925.3" y="735.8" width="14.4" height="33.3" fill="#494949"/>
<rect x="941.3" y="735.8" width="14.4" height="33.3" fill="#494949"/>
<rect x="957.3" y="735.8" width="14.4" height="33.3" fill="#424242"/>
<rect x="973.3" y="735.8" width="14.4" height="33.3" fill="#494949"/>
<rect x="989.3" y="735.8" width="14.4" height="33.3" fill="#494949"/>
<rect x="1005.3" y="735.8" width="14.4" height="33.3" fill="#494949"/>
<rect x="1021.3" y="735.8" width="14.4" height="33.3" fill="#494949"/>
<rect x="1037.3" y="735.8" width="14.4" height="33.3" fill="#424242"/>
<rect x="1053.3" y="735.8" width="14.4" height="33.3" fill="#494949"/>
<rect x="1069.3" y="735.8" width="14.4" height="33.3" fill="#494949"/>
<rect x="1085.3" y="735.8" width="14.4" height="33.3" fill="#494949"/>
<rect x="1101.3" y="735.8" width="14.4" height="33.3" fill="#494949"/>
<rect x="1117.3" y="735.8" width="14.4" height="33.3" fill="#424242"/>
<rect x="1133.3" y="735.8" width="14.4" height="33.3" fill="#494949"/>
<rect x="1149.3" y="735.8" width="14.4" height="33.3" fill="#494949"/>
<rect x="1165.3" y="735.8" width="14.4" height="33.3" fill="#494949"/>
<rect x="1181.3" y="735.8" width="14.4" height="33.3" fill="#494949"/>
<rect x="1197.3" y="735.8" width="14.4" height="33.3" fill="#424242"/>
<rect x="1213.3" y="735.8" width="14.4" height="33.3" fill="#494949"/>
<rect x="1229.3" y="735.8" width="14.4" height="33.3" fill="#494949"/>
<rect x="1245.3" y="735.8" width="14.4" height="33.3" fill="#494949"/>
<rect x="1261.3" y="735.8" width="14.4" height="33.3" fill="#494949"/>
<rect x="1277.3" y="735.8" width="14.4" height="33.3" fill="#424242"/>
<rect x="1293.3" y="735.8" width="14.4" height="33.3" fill="#494949"/>
<rect x="1309.3" y="735.8" width="14.4" height="33.3" fill="#494949"/>
<rect x="1325.3" y="735.8" width="14.4" height="33.3" fill="#494949"/>
<rect x="1341.3" y="735.8" width="14.4" height="33.3" fill="#494949"/>
<rect x="1357.3" y="735.8" width="14.4" height="33.3" fill="#424242"/>
<rect x="1373.3" y="735.8" width="14.4" height="33.3" fill="#494949"/>
<rect x="1389.3" y="735.8" width="14.4" height="33.3" fill="#494949"/>
<rect x="1405.3" y="735.8" width="14.4" height="33.3" fill="#494949"/>
<rect x="1421.3" y="735.8" width="14.4" height="33.3" fill="#494949"/>
<rect x="1437.3" y="735.8" width="14.4" height="33.3" fill="#424242"/>
<rect x="1453.3" y="735.8" width="2.4" height="33.3" fill="#494949"/>
</svg><div class="abs" style="left:1456.5px;top:696.5px;width:25.5px;height:130px;background:#3a3a3a;border:1.5px solid #262626;box-sizing:border-box;border-radius:2px"></div><div class="abs" style="left:794.2px;top:652.3px;width:17.6px;height:41.2px;background:#ff9a9a;border:2px solid #cf1212;box-sizing:border-box;border-radius:1.5px"></div><div class="abs" style="left:802.1px;top:693px;width:2px;height:133px;background:#c41212;"></div><div class="t" style="left:39.3px;top:620.3px;font-family:'Liberation Sans','DejaVu Sans',sans-serif;font-weight:bold;font-size:21.8px;color:#e2e2e2;text-shadow:0 -1px 1px #1a1a1a">Linha do tempo</div><div class="t num" style="left:413.5px">1</div><div class="t num" style="left:476.5px">5</div><div class="t num" style="left:556.5px">10</div><div class="t num" style="left:636.5px">15</div><div class="t num" style="left:716.5px">20</div><div class="t num" style="left:796.5px">25</div><div class="t num" style="left:876.5px">30</div><div class="t num" style="left:956.5px">35</div><div class="t num" style="left:1036.5px">40</div><div class="t num" style="left:1116.5px">45</div><div class="t num" style="left:1196.5px">50</div><div class="t num" style="left:1276.5px">55</div><div class="t num" style="left:1356.5px">60</div><div class="t num" style="left:1436.5px;width:13px;overflow:hidden">65</div><div class="t num" style="left:796.5px;width:13.4px;overflow:hidden;color:#ffecec">25</div><div class="t lname" style="top:705.3px">Armature_1</div><div class="t lname" style="top:741.3px;color:#e2e2e2">day<span class="hy">-</span>of<span class="hy">-</span>the...</div><div class="t bt" style="left:896.5px;color:#e3a81f;font-weight:bold">25</div><div class="t bt" style="left:962.5px;color:#808080;-webkit-text-stroke:.45px #808080;letter-spacing:.1px">24,00 fps</div><div class="t bt" style="left:1061px;color:#e3a81f;font-weight:bold">1,0</div><div class="t bt" style="left:1093px;color:#cdcdcd;-webkit-text-stroke:.6px #cdcdcd">s</div><div class="abs" style="left:897px;top:857.5px;width:22px;height:2px;background:repeating-linear-gradient(90deg,#e3a81f 0 2px,transparent 2px 4px);"></div><div class="abs" style="left:963px;top:857.5px;width:54px;height:2px;background:repeating-linear-gradient(90deg,#7d7d7d 0 2px,transparent 2px 4px);"></div><div class="abs" style="left:1061px;top:857.5px;width:30px;height:2px;background:repeating-linear-gradient(90deg,#e3a81f 0 2px,transparent 2px 4px);"></div><svg class="abs" style="left:0;top:0" width="1508" height="910" viewBox="0 0 1508 910">
<defs><linearGradient id="g1" x1="0" y1="0" x2="0" y2="1"><stop offset="0" stop-color="#e6e6e6"/><stop offset="1" stop-color="#a6a6a6"/></linearGradient><linearGradient id="g2" x1="0" y1="0" x2="0" y2="1"><stop offset="0" stop-color="#d8d8d8"/><stop offset="1" stop-color="#b0b0b0"/></linearGradient><pattern id="chk" width="4" height="4" patternUnits="userSpaceOnUse"><rect width="4" height="4" fill="#d0d0d0"/><rect width="2" height="2" fill="#555"/><rect x="2" y="2" width="2" height="2" fill="#555"/></pattern></defs>
<path d="M34.6,592.4 L45.6,602.4 M45.6,592.4 L34.6,602.4" stroke="#0e0e0e" stroke-width="2.6" fill="none"/>
<path d="M34.6,593.6 L45.6,603.6 M45.6,593.6 L34.6,603.6" stroke="#c6c6c6" stroke-width="2.6" fill="none"/>
<path d="M1458.3,598.7 L1464.2,593 V604.4 Z M1466.6,598.7 L1472.5,593 V604.4 Z" fill="#bdbdbd"/>
<path d="M1450.3,624.5 H1457 V631 Z" fill="#bdbdbd"/>
<rect x="1458.3" y="620.2" width="16" height="1.6" fill="#0c0c0c"/>
<rect x="1458.3" y="621.7" width="16" height="2.1" fill="#c4c4c4"/>
<rect x="1458.3" y="624.7" width="16" height="1.6" fill="#0c0c0c"/>
<rect x="1458.3" y="626.2" width="16" height="2.1" fill="#c4c4c4"/>
<rect x="1458.3" y="629.2" width="16" height="1.6" fill="#0c0c0c"/>
<rect x="1458.3" y="630.7" width="16" height="2.1" fill="#c4c4c4"/>
<rect x="1458.3" y="633.7" width="16" height="1.6" fill="#0c0c0c"/>
<rect x="1458.3" y="635.2" width="16" height="2.1" fill="#c4c4c4"/>
<path d="M301.6,670.6 C306,662.5 310,660.9 314,660.9 C318,660.9 322,662.5 326.6,670.6" fill="none" stroke="#262626" stroke-width="1.6"/>
<path d="M302,671.5 C306,664 310,662 314,662 C318,662 322,664 326.2,671.5 C322,678.2 318,680.2 314,680.2 C310,680.2 306,678.2 302,671.5 Z" fill="#c6c6c6"/>
<circle cx="313.9" cy="671.3" r="6" fill="#2c2c2c"/>
<circle cx="316.2" cy="669.8" r="1.9" fill="#c8c8c8"/>
<path d="M347.5,670.5 V666.2 A4.75,5.2 0 0 1 357,666.2 V670.5" fill="none" stroke="#242424" stroke-width="4.2"/>
<path d="M347.5,670.5 V666.2 A4.75,5.2 0 0 1 357,666.2 V670.5" fill="none" stroke="#cdcdcd" stroke-width="2.7"/>
<rect x="342.1" y="668.7" width="19.9" height="15.1" rx="2.6" fill="url(#g2)"/>
<rect x="342.6" y="682.2" width="18.9" height="1.4" rx="0.7" fill="#dcdcdc"/>
<rect x="350.2" y="673.9" width="3.9" height="5.9" fill="#2a2a2a"/>
<rect x="350.2" y="677.6" width="3.9" height="2.2" fill="#0c0c0c"/>
<rect x="383.1" y="663.1" width="7.9" height="19.7" fill="none" stroke="#000" stroke-width="2.1"/>
<g fill="none" stroke="#2f2109" stroke-linecap="butt" stroke-linejoin="round" transform="translate(-0.9,-1.1)"><path d="M88.3,709 L83.2,717" stroke-width="5.6"/><path d="M86.5,708.6 L79.3,709.3 L75.6,714.6" stroke-width="2.7"/><path d="M88.6,711 L92,716.2 L97.3,716.2" stroke-width="2.7"/><path d="M83,717.5 L80.5,723 L73,726.6" stroke-width="3.1"/><path d="M84,718 L87.3,722.6 L87.3,731" stroke-width="3.1"/><circle cx="90.2" cy="706.3" r="3.3" fill="#2f2109" stroke="none"/></g>
<g fill="none" stroke="#e9e0c8" stroke-linecap="butt" stroke-linejoin="round"><path d="M88.3,709 L83.2,717" stroke-width="5.6"/><path d="M86.5,708.6 L79.3,709.3 L75.6,714.6" stroke-width="2.7"/><path d="M88.6,711 L92,716.2 L97.3,716.2" stroke-width="2.7"/><path d="M83,717.5 L80.5,723 L73,726.6" stroke-width="3.1"/><path d="M84,718 L87.3,722.6 L87.3,731" stroke-width="3.1"/></g>
<circle cx="90.2" cy="706.5" r="3" fill="#efe7d2"/>
<g transform="translate(274,712) rotate(-47)"><path d="M-14.5,0 L-8,-4 H9 A4,4 0 0 1 9,4 H-8 Z" fill="#f3ecd8" stroke="#3e2d10" stroke-width="1.1" stroke-linejoin="round"/><path d="M-8,-4 H4.5 V4 H-8 Z" fill="#b8a986" stroke="#3e2d10" stroke-width="1"/><path d="M-14.5,0 L-11.5,-1.8 V1.8 Z" fill="#3e2d10"/><path d="M4.5,-4 V4" stroke="#3e2d10" stroke-width="1.2"/></g>
<path d="M313,712.0 h4 v1.1 h1.1 v1 h1 v4 h-1 v1 h-1.1 v1.1 h-4 v-1.1 h-1.1 v-1 h-1 v-4 h1 v-1 h1.1 z" fill="#fff"/><path d="M351,712.0 h4 v1.1 h1.1 v1 h1 v4 h-1 v1 h-1.1 v1.1 h-4 v-1.1 h-1.1 v-1 h-1 v-4 h1 v-1 h1.1 z" fill="#fff"/>
<rect x="382" y="704" width="10" height="22" fill="#9a31d4"/>
<path d="M414,723.2 L419,719.4 L424,723.2 L419,727 Z" fill="#8a6a12"/><rect x="417.4" y="718.8" width="3.2" height="8.8" fill="#8a6a12"/>
<path d="M798,723.2 L803,719.4 L808,723.2 L803,727 Z" fill="#8a6a12"/><rect x="801.4" y="718.8" width="3.2" height="8.8" fill="#8a6a12"/>
<path d="M74.5,741 H98 V766 H84 V754.5 H74.5 Z" fill="url(#g1)"/>
<rect x="74.5" y="740.4" width="23.5" height="2" fill="#1d1d1d"/>
<path d="M74.5,756 H83 V765.5 Z" fill="#dedede" stroke="#2a2a2a" stroke-width="0.8"/>
<path d="M313,748.0 h4 v1.1 h1.1 v1 h1 v4 h-1 v1 h-1.1 v1.1 h-4 v-1.1 h-1.1 v-1 h-1 v-4 h1 v-1 h1.1 z" fill="#050505"/><path d="M351,748.0 h4 v1.1 h1.1 v1 h1 v4 h-1 v1 h-1.1 v1.1 h-4 v-1.1 h-1.1 v-1 h-1 v-4 h1 v-1 h1.1 z" fill="#050505"/>
<rect x="382" y="740" width="10" height="22" fill="#4a80ff"/>
<circle cx="419" cy="757" r="4" fill="none" stroke="#0a0a0a" stroke-width="1.9"/>
<rect x="798.6" y="749.2" width="8.8" height="13.6" fill="none" stroke="#0a0a0a" stroke-width="1.9"/>
<path d="M1461.5,714 L1469,704.5 L1476.5,714 Z" fill="#5c5c5c"/>
<path d="M1461.5,807 L1469,816.5 L1476.5,807 Z" fill="#5c5c5c"/>
<path d="M44,839.5 H64 V860 H53 V849.5 H44 Z" fill="url(#g1)"/>
<rect x="44" y="838.6" width="20" height="1.6" fill="#222"/>
<path d="M44,851 H51.8 V859.5 Z" fill="#d6d6d6"/>
<path d="M44,850.2 H53 V860" fill="none" stroke="#1f1f1f" stroke-width="1.4"/>
<path d="M84,844 Q84,841.3 86.5,841.3 H91.5 Q93.5,841.3 94.3,843 L95.2,845 H105 Q108,845 108,848 V858.7 Q108,861.7 105,861.7 H87 Q84,861.7 84,858.7 Z" fill="url(#g1)"/>
<path d="M84.6,842.4 Q85.3,840.3 87,840.3 H91.8 Q93.8,840.3 94.6,842 L95.6,844 H105 Q107.5,844 108.2,846" fill="none" stroke="#262626" stroke-width="1.4"/>
<path d="M134,844 V842 Q134,840.3 135.8,840.3 H142.2 Q144,840.3 144,842 V844" fill="none" stroke="#cfcfcf" stroke-width="1.9"/>
<path d="M128,847.3 Q128,843.6 131.5,843.6 H146.5 Q150,843.6 150,847.3 Z" fill="#d4d4d4"/>
<path d="M130,849.3 H148 L146.8,859.7 Q146.6,861.7 144.6,861.7 H133.4 Q131.4,861.7 131.2,859.7 Z" fill="url(#g2)"/>
<rect x="132.89999999999998" y="850" width="1.7" height="9.6" fill="#454545"/>
<rect x="136.7" y="850" width="1.7" height="9.6" fill="#454545"/>
<rect x="140.5" y="850" width="1.7" height="9.6" fill="#454545"/>
<rect x="144.29999999999998" y="850" width="1.7" height="9.6" fill="#454545"/>
<rect x="338.3" y="842" width="14.5" height="15.7" rx="2" fill="#c4c4c4"/>
<path d="M351,846.6 L362.2,842.3 V857.5 L351,853.2 Z" fill="#c4c4c4"/>
<rect x="388.2" y="836.6" width="1.7" height="21" fill="#c4c4c4"/>
<rect x="392.3" y="836.6" width="1.7" height="21" fill="#c4c4c4"/>
<rect x="396.4" y="836.6" width="1.7" height="21" fill="#c4c4c4"/>
<rect x="611.2" y="830" width="1.6" height="39.5" fill="#2b2b2b"/>
<rect x="612.8000000000001" y="830" width="1.4" height="39.5" fill="#5e5e5e"/>
<rect x="711" y="830" width="1.6" height="39.5" fill="#2b2b2b"/>
<rect x="712.6" y="830" width="1.4" height="39.5" fill="#5e5e5e"/>
<rect x="877.3" y="830" width="1.6" height="39.5" fill="#2b2b2b"/>
<rect x="878.9" y="830" width="1.4" height="39.5" fill="#5e5e5e"/>
<rect x="428" y="838.3" width="3.4" height="15.8" fill="url(#g1)"/><rect x="428" y="837.6" width="3.4" height="1.3" fill="#222"/>
<path d="M433.5,846.2 L448,838.3000000000001 V854.1 Z" fill="url(#g1)"/>
<path d="M464,846.2 L478.5,838.3000000000001 V854.1 Z" fill="url(#g1)"/>
<rect x="482.3" y="838.3" width="3.8" height="15.8" fill="url(#g1)"/><rect x="482.3" y="837.6" width="3.8" height="1.3" fill="#222"/>
<path d="M519.6,846.4 L501.7,837.1 V855.6999999999999 Z" fill="url(#g1)"/>
<rect x="536" y="838.3" width="3.8" height="15.8" fill="url(#g1)"/><rect x="536" y="837.6" width="3.8" height="1.3" fill="#222"/>
<path d="M557.8,846.2 L543.5,838.3000000000001 V854.1 Z" fill="url(#g1)"/>
<path d="M588.5,846.2 L574,838.3000000000001 V854.1 Z" fill="url(#g1)"/>
<rect x="590.8" y="838.3" width="3.6" height="15.8" fill="url(#g1)"/><rect x="590.8" y="837.6" width="3.6" height="1.3" fill="#222"/>
<rect x="640" y="837.2" width="2" height="20.5" fill="#cdcdcd"/>
<rect x="630" y="843.6" width="21.8" height="7.6" fill="#8e8e8e" stroke="#d2d2d2" stroke-width="1.7"/>
<rect x="629.3" y="842" width="23.4" height="1.3" fill="#222"/>
<path d="M669.5,847 H681 V843 L692.5,849 L681,855 V851.3 H673.3 V856 H690.2 V853.5 H694 V860 H669.5 Z" fill="url(#g1)"/>
<path d="M681,838.6 L693.6,846.4 L681,846.4 Z" fill="url(#g1)"/>
<rect x="730" y="837.5" width="11.5" height="11.5" fill="url(#chk)"/>
<rect x="736" y="843.5" width="14" height="14" fill="url(#g1)"/><rect x="736" y="842.7" width="14" height="1.4" fill="#222"/>
<rect x="767" y="838" width="11" height="11" fill="none" stroke="#cfcfcf" stroke-width="1.9"/>
<rect x="773.3" y="844.7" width="12" height="12" fill="#464646" stroke="#cfcfcf" stroke-width="1.9"/>
<rect x="766" y="836.6" width="13" height="1.3" fill="#222"/>
<rect x="801.8" y="838" width="8.5" height="16.5" fill="url(#g2)"/><rect x="801.8" y="837" width="8.5" height="1.4" fill="#222"/>
<rect x="809.5" y="842.5" width="8.5" height="17.3" fill="url(#g1)" stroke="#464646" stroke-width="1"/>
<circle cx="806" cy="851.3" r="1.7" fill="#333"/><circle cx="813.8" cy="855.7" r="1.7" fill="#333"/>
<path d="M841.3,838.6 H837 V856.8 H841.3" fill="none" stroke="#cfcfcf" stroke-width="2.8"/>
<path d="M850.7,838.6 H855 V851" fill="none" stroke="#cfcfcf" stroke-width="2.8"/>
<rect x="835.4" y="836.6" width="21.2" height="1.4" fill="#222"/>
<circle cx="846" cy="848" r="2.6" fill="#d8d8d8"/>
<path d="M848.5,853.6 H858 L853.2,860 Z" fill="#d0d0d0"/>
<path d="M1141.2,849.5 A9,9 0 1 1 1150,858.3" fill="none" stroke="#d4d4d4" stroke-width="3.4"/>
<path d="M1133,846.2 H1148.2 L1140.6,856 Z" fill="#d4d4d4"/>
<rect x="1134" y="860.1" width="24.2" height="1.9" fill="#dadada"/>
<path d="M1180.3,855.6 L1185.3,850.6 L1187.5,852.6 L1190.8,848 L1197,855.6 Z" fill="#8c8c8c" stroke="#d0d0d0" stroke-width="1.3" stroke-linejoin="round"/>
<rect x="1221.3" y="847.2" width="181" height="9.3" rx="1.5" fill="#0b0b0b"/>
<rect x="1223.4" y="849.2" width="176.8" height="5.3" rx="1" fill="#363636"/>
<rect x="1222" y="856.6" width="180" height="1" fill="#565656"/>
<path d="M1274,839 L1281.3,846.3 V858 H1266.7 V846.3 Z" fill="#5f5f5f" stroke="#141414" stroke-width="1.5" stroke-linejoin="round"/>
<rect x="1265.5" y="858.8" width="17" height="1.5" fill="#3a3a3a"/>
<path d="M1422,856 L1433.5,844.6 L1437.3,848.6 L1442.6,842.6 L1454,856 Z" fill="#8c8c8c" stroke="#d0d0d0" stroke-width="1.5" stroke-linejoin="round"/>
<path d="M1430.5,856 L1437.3,848.6 L1440.2,851.8" fill="none" stroke="#bdbdbd" stroke-width="1.1"/>
<path d="M737.1,876 L735.5,884.2" stroke="#0f0f0f" stroke-width="1.7"/>
<path d="M741.1,876 L739.5,884.2" stroke="#0f0f0f" stroke-width="1.7"/>
<path d="M745.1,876 L743.5,884.2" stroke="#0f0f0f" stroke-width="1.7"/>
<path d="M749.1,876 L747.5,884.2" stroke="#0f0f0f" stroke-width="1.7"/>
<path d="M753.1,876 L751.5,884.2" stroke="#0f0f0f" stroke-width="1.7"/>
<path d="M757.1,876 L755.5,884.2" stroke="#0f0f0f" stroke-width="1.7"/>
<path d="M761.1,876 L759.5,884.2" stroke="#0f0f0f" stroke-width="1.7"/>
<path d="M765.1,876 L763.5,884.2" stroke="#0f0f0f" stroke-width="1.7"/>
<path d="M769.1,876 L767.5,884.2" stroke="#0f0f0f" stroke-width="1.7"/>
<path d="M773.1,876 L771.5,884.2" stroke="#0f0f0f" stroke-width="1.7"/>
</svg></div></div>
</body></html>
